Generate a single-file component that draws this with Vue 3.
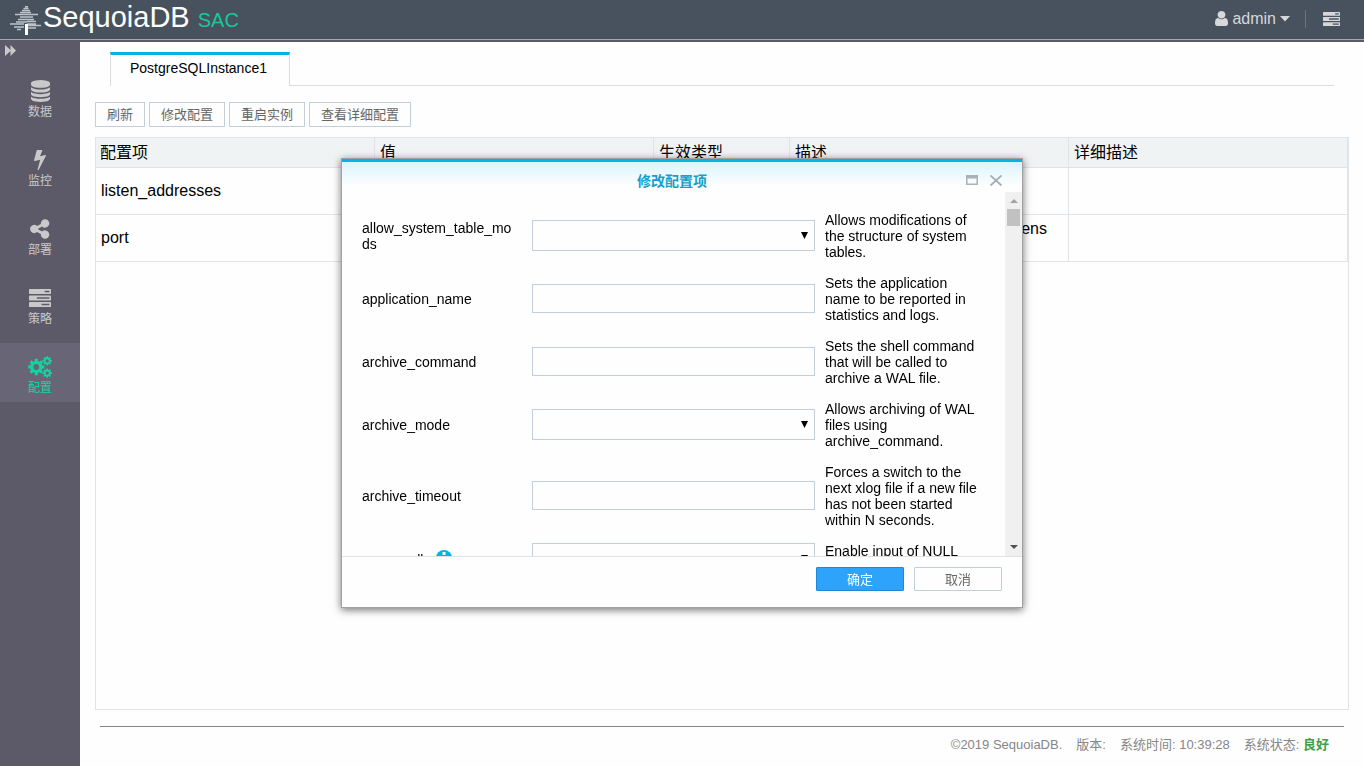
<script setup>
import { ref } from 'vue'

const gear = (cx, cy, outer, inner, hole, teeth) => {
  const step = (Math.PI * 2) / teeth
  const pts = []
  for (let i = 0; i < teeth; i++) {
    const a = i * step
    for (const [r, o] of [[inner, -0.3], [outer, -0.24], [outer, 0.24], [inner, 0.3]]) {
      pts.push(`${(cx + r * Math.cos(a + o * step)).toFixed(2)} ${(cy + r * Math.sin(a + o * step)).toFixed(2)}`)
    }
  }
  return `M${pts.join('L')}ZM${cx - hole} ${cy}a${hole} ${hole} 0 1 0 ${hole * 2} 0a${hole} ${hole} 0 1 0 ${-hole * 2} 0Z`
}

const bars = 'M1024 1408h640v-128h-640v128zM640 896h1024v-128h-1024v128zM1280 384h384v-128h-384v128zM1792 1216v256q0 26-19 45t-45 19h-1664q-26 0-45-19t-19-45v-256q0-26 19-45t45-19h1664q26 0 45 19t19 45zM1792 704v256q0 26-19 45t-45 19h-1664q-26 0-45-19t-19-45v-256q0-26 19-45t45-19h1664q26 0 45 19t19 45zM1792 192v256q0 26-19 45t-45 19h-1664q-26 0-45-19t-19-45v-256q0-26 19-45t45-19h1664q26 0 45 19t19 45z'

const nav = [
  { text: '数据', w: 19, h: 22, box: '0 0 1536 1792', d: 'M768 768q237 0 443-43t325-127v170q0 69-103 128t-280 93.5-385 34.5-385-34.5-280-93.5-103-128v-170q119 84 325 127t443 43zM768 1536q237 0 443-43t325-127v170q0 69-103 128t-280 93.5-385 34.5-385-34.5-280-93.5-103-128v-170q119 84 325 127t443 43zM768 1152q237 0 443-43t325-127v170q0 69-103 128t-280 93.5-385 34.5-385-34.5-280-93.5-103-128v-170q119 84 325 127t443 43zM768 0q208 0 385 34.5t280 93.5 103 128v128q0 69-103 128t-280 93.5-385 34.5-385-34.5-280-93.5-103-128v-128q0-69 103-128t280-93.5 385-34.5z' },
  { text: '监控', w: 12, h: 20, box: '0 0 896 1664', d: 'M885 438q18 20 7 44l-540 1157q-13 25-42 25-4 0-14-2-17-5-25.5-19t-4.5-30l197-808-406 101q-4 1-12 1-18 0-31-11-18-15-13-39l201-825q4-16 18-26t32-10h328q19 0 32 12.5t13 29.5q0 8-5 18l-171 463 396-98q8-2 12-2 19 0 34 15z' },
  { text: '部署', w: 20, h: 20, box: '0 0 20 20', d: 'M0 10a4.2 4.2 0 0 1 7-3.1l3.9-1.95a4.2 4.2 0 1 1 1.25 2.5l-3.9 1.95v1.2l3.9 1.95a4.2 4.2 0 1 1-1.25 2.5l-3.9-1.95A4.2 4.2 0 0 1 0 10z' },
  { text: '策略', w: 22, h: 18, box: '0 128 1792 1408', d: bars },
  { text: '配置', w: 24, h: 22, box: '0 0 24 22', d: gear(8.3, 11, 8.3, 6.2, 2.9, 8) + gear(19.2, 4.9, 4.8, 3.6, 1.6, 8) + gear(19.2, 17.1, 4.8, 3.6, 1.6, 8), active: true }
]

const actions = ['刷新', '修改配置', '重启实例', '查看详细配置']
const columns = ['配置项', '值', '生效类型', '描述', '详细描述']
const rows = [
  ['listen_addresses', '', '', '', ''],
  ['port', '', '', 'Sets the TCP port the server listens on.', '']
]

const fields = ref([
  { name: 'allow_system_table_mods', type: 'select', value: '', desc: 'Allows modifications of the structure of system tables.' },
  { name: 'application_name', type: 'text', value: '', desc: 'Sets the application name to be reported in statistics and logs.' },
  { name: 'archive_command', type: 'text', value: '', desc: 'Sets the shell command that will be called to archive a WAL file.' },
  { name: 'archive_mode', type: 'select', value: '', desc: 'Allows archiving of WAL files using archive_command.' },
  { name: 'archive_timeout', type: 'text', value: '', desc: 'Forces a switch to the next xlog file if a new file has not been started within N seconds.' },
  { name: 'array_nulls', type: 'select', value: '', info: true, desc: 'Enable input of NULL elements in arrays.' }
])
</script>

<template>
  <div class="page">
    <header class="top">
      <div class="brand">
        <svg class="tree" width="32" height="29" viewBox="0 0 32 29">
          <g stroke="#bcc3c8" stroke-width="1.400" fill="none">
            <path d="M15 .7h3M13.500 2.500h5M12 4.500h8M10 6.500h11M5 8.500h23M10 11h13M8 13.500h16M6 16h11M17 15.500h9M0 18h14M17 18h9M15 19.500h16M4 21h10M18 22h8M7 23.500h4" />
          </g>
          <path d="M15 18h3v11h-3z" fill="#fff" />
        </svg>
        <span class="name">SequoiaDB</span>
        <span class="sac">SAC</span>
      </div>
      <div class="tools">
        <button class="user" type="button">
          <svg width="13" height="15" viewBox="0 128 1280 1536" preserveAspectRatio="none"><path fill="currentColor" d="M1280 1399q0 109-62.500 187t-150.500 78h-854q-88 0-150.500-78t-62.500-187q0-85 8.500-160.500t31.500-152 58.500-131 94-89 134.500-34.500q131 128 313 128t313-128q76 0 134.500 34.500t94 89 58.500 131 31.500 152 8.500 160.500zM1024 512q0 159-112.500 271.500t-271.500 112.500-271.500-112.500-112.500-271.500 112.500-271.500 271.500-112.500 271.500 112.500 112.500 271.500z" /></svg>
          <span>admin</span>
          <svg width="10" height="6" viewBox="0 0 10 6"><path fill="currentColor" d="M0 0h10L5 5.500z" /></svg>
        </button>
        <button class="tasks" type="button" aria-label="任务">
          <svg width="17" height="14" viewBox="0 128 1792 1408" preserveAspectRatio="none"><path fill="currentColor" :d="bars" /></svg>
        </button>
      </div>
    </header>

    <div class="shell">
      <nav class="side">
        <button class="expand" type="button" aria-label="展开">
          <svg width="11" height="11" viewBox="0 0 11 11"><path fill="currentColor" d="M0 0l5.500 5V0L11 5.500 5.500 11V6L0 11z" /></svg>
        </button>
        <a v-for="n in nav" :key="n.text" href="#" :class="['item', { active: n.active }]">
          <span class="icon"><svg :width="n.w" :height="n.h" :viewBox="n.box" preserveAspectRatio="none"><path fill="currentColor" fill-rule="evenodd" :d="n.d" /></svg></span>
          <span>{{ n.text }}</span>
        </a>
      </nav>

      <main class="main">
        <div class="tabs">
          <a class="tab" href="#">PostgreSQLInstance1</a>
        </div>
        <div class="actions">
          <button v-for="a in actions" :key="a" class="btn" type="button">{{ a }}</button>
        </div>
        <div class="grid">
          <table>
            <colgroup><col><col><col class="narrow"><col><col></colgroup>
            <thead>
              <tr><th v-for="c in columns" :key="c">{{ c }}</th></tr>
            </thead>
            <tbody>
              <tr v-for="r in rows" :key="r[0]"><td v-for="(c, i) in r" :key="i">{{ c }}</td></tr>
            </tbody>
          </table>
        </div>
        <footer class="foot">
          <span>©2019 SequoiaDB.</span>
          <span>版本:</span>
          <span>系统时间: 10:39:28</span>
          <span>系统状态: <b>良好</b></span>
        </footer>
      </main>
    </div>

    <div class="overlay">
      <section class="modal" role="dialog" aria-labelledby="modal-title">
        <div class="modal-head">
          <h2 id="modal-title">修改配置项</h2>
          <div class="modal-tools">
            <button type="button" aria-label="最大化">
              <svg width="12" height="10" viewBox="0 0 12 10"><path fill="#a9b2b9" fill-rule="evenodd" d="M0 0h12v10H0zM1.500 3.500v5h9v-5z" /></svg>
            </button>
            <button type="button" aria-label="关闭">
              <svg width="12" height="11" viewBox="0 0 12 11"><path stroke="#a3acb3" stroke-width="1.800" d="M.5.5l11 10M11.500.5l-11 10" /></svg>
            </button>
          </div>
        </div>
        <div class="modal-body">
          <form class="form">
            <div v-for="f in fields" :key="f.name" class="field">
              <label :for="f.name">{{ f.name }}<svg v-if="f.info" class="info" width="16" height="16" viewBox="0 0 16 16"><circle cx="8" cy="8" r="8" fill="#00b4e5" /><path fill="#fff" d="M6.500 2h3v3h-3zM5.500 6.500h4V11h1.200v2H5.500v-2h1V8.500h-1z" /></svg></label>
              <div v-if="f.type === 'select'" class="pick">
                <select :id="f.name" v-model="f.value"><option value=""></option></select>
                <svg width="7" height="7" viewBox="0 0 7 7"><path d="M0 0h7L3.500 7z" /></svg>
              </div>
              <input v-else :id="f.name" v-model="f.value" type="text">
              <p>{{ f.desc }}</p>
            </div>
          </form>
          <div class="scroll" aria-hidden="true">
            <svg width="8" height="4" viewBox="0 0 8 4"><path fill="#a3a3a3" d="M4 0l4 4H0z" /></svg>
            <i></i>
            <svg width="8" height="4" viewBox="0 0 8 4"><path fill="#505050" d="M0 0h8L4 4z" /></svg>
          </div>
        </div>
        <div class="modal-foot">
          <button class="ok" type="button">确定</button>
          <button class="cancel" type="button">取消</button>
        </div>
      </section>
    </div>
  </div>
</template>

<style>
body {
  margin: 0;
}
</style>

<style scoped>
* {
  box-sizing: border-box;
}
.page {
  min-height: 100vh;
  display: flex;
  flex-direction: column;
  background: #fefefe;
  color: #000;
  font: 16px/18px "Liberation Sans", "Noto Sans CJK SC", sans-serif;
}
button, input, select {
  font-family: inherit;
}
a {
  text-decoration: none;
}
svg {
  display: block;
  flex: none;
}
.top {
  height: 42px;
  padding: 0 24px 5px 10px;
  display: flex;
  align-items: center;
  justify-content: space-between;
  background: linear-gradient(#47525e 39px, #a6a5ae 39px, #a6a5ae 40px, #5c5a69 40px);
}
.brand {
  display: flex;
  align-items: baseline;
  padding-bottom: 4px;
  color: #fff;
}
.tree {
  align-self: flex-end;
  margin-right: 1px;
}
.name {
  font-size: 29px;
  line-height: 36px;
}
.sac {
  margin-left: 8px;
  font-size: 20px;
  color: #19c89a;
}
.tools {
  display: flex;
  align-items: center;
}
.tools button {
  padding: 0;
  border: 0;
  background: none;
  color: #d6d8da;
}
.user {
  display: flex;
  align-items: center;
  gap: 4px;
  font-size: 16px;
  line-height: 18px;
}
.tools .tasks {
  height: 18px;
  margin-left: 15px;
  padding-left: 17px;
  border-left: 1px solid #6c747d;
}
.shell {
  flex: 1;
  display: flex;
}
.side {
  flex: none;
  width: 80px;
  background: #5c5a69;
  display: flex;
  flex-direction: column;
  gap: 10px;
}
.expand {
  height: 15px;
  padding: 3px 5px;
  border: 0;
  background: none;
  color: #c9c9c9;
}
.item {
  height: 59px;
  padding-top: 13px;
  display: flex;
  flex-direction: column;
  align-items: center;
  color: #c9c9c9;
  font-size: 12px;
  line-height: 20px;
}
.icon {
  height: 22px;
  display: flex;
  align-items: center;
}
.active {
  background: #676576;
  color: #13d49f;
}
.main {
  flex: 1;
  min-width: 0;
  display: flex;
  flex-direction: column;
  padding: 10px 15px 0;
}
.tabs {
  margin: 0 15px;
  height: 34px;
  display: flex;
  border-bottom: 1px solid #dadcde;
}
.tab {
  height: 34px;
  padding: 4px 22px 4px 19px;
  border: 1px solid #dadcde;
  border-top: 3px solid #00b4e5;
  border-bottom: 0;
  background: #fefefe;
  color: #000;
  font-size: 14px;
}
.actions {
  display: flex;
  gap: 4px;
  margin: 16px 0 10px;
}
.btn {
  height: 25px;
  padding: 0 11px;
  border: 1px solid #c3cedb;
  background: #fefefe;
  color: #666;
  font-size: 13px;
  line-height: 18px;
}
.grid {
  flex: 1;
  border: 1px solid #e1e4e6;
}
table {
  width: 100%;
  table-layout: fixed;
  border-collapse: separate;
  border-spacing: 0;
}
.narrow {
  width: 136px;
}
th, td {
  border-right: 1px solid #e1e4e6;
  border-bottom: 1px solid #e1e4e6;
  text-align: left;
  font-weight: 400;
}
th {
  height: 30px;
  padding: 0 5px 0 4px;
  background: #eff3f4;
}
th + th {
  padding-left: 5px;
}
td {
  height: 47px;
  padding: 5px;
}
.foot {
  margin: 16px 5px 0;
  padding: 9px 15px 12px 0;
  border-top: 1px solid #868686;
  display: flex;
  justify-content: flex-end;
  gap: 14px;
  color: #868686;
  font-size: 13px;
}
.foot b {
  color: #3ea04b;
}
.overlay {
  position: fixed;
  inset: 0;
  display: grid;
  place-items: center;
}
.modal {
  width: 50%;
  border: 1px solid #a0a0a0;
  background: #fefefe;
  box-shadow: 0 2px 8px rgba(0, 0, 0, .55);
}
.modal-head {
  height: 33px;
  border-top: 3px solid #00b4e5;
  background: linear-gradient(#daf5fd, #fefefe 24px);
  display: grid;
  grid-template-columns: 1fr auto 1fr;
  align-items: center;
  padding: 6px 20px 0 0;
}
h2 {
  grid-column: 2;
  margin: 0;
  padding-top: 1px;
  color: #159fc9;
  font-size: 14px;
  line-height: 18px;
}
.modal-tools {
  display: flex;
  align-items: center;
  justify-content: flex-end;
  gap: 12px;
}
.modal-tools button {
  padding: 0;
  border: 0;
  background: none;
}
.modal-body {
  height: 364px;
  overflow: hidden;
  display: flex;
}
.form {
  flex: 1;
  padding: 20px 20px 0;
  display: flex;
  flex-direction: column;
  gap: 15px;
  font-size: 14px;
  line-height: 16px;
}
.field {
  display: grid;
  grid-template-columns: 160px 1fr 160px;
  gap: 10px;
  align-items: center;
}
label {
  padding-right: 5px;
  overflow-wrap: anywhere;
}
.info {
  display: inline-block;
  margin-left: 6px;
  vertical-align: -1px;
}
.field p {
  margin: 0;
}
.field input, .field select {
  display: block;
  width: 100%;
  height: 29px;
  margin: 0 0 1px;
  padding: 0 8px;
  border: 1px solid #c3cedb;
  border-radius: 0;
  background: #fefefe;
  font-size: 14px;
}
.field select {
  height: 31px;
  appearance: none;
}
.pick {
  position: relative;
}
.pick svg {
  position: absolute;
  right: 7px;
  top: 12px;
  pointer-events: none;
}
.scroll {
  flex: none;
  width: 17px;
  padding: 7px 0;
  background: #f0f0f0;
  display: flex;
  flex-direction: column;
  align-items: center;
}
.scroll i {
  width: 13px;
  height: 17px;
  margin: 6px 0 auto;
  background: #c1c1c1;
}
.modal-foot {
  height: 51px;
  padding: 10px 20px;
  border-top: 1px solid #e1e1e1;
  display: flex;
  align-items: flex-start;
  justify-content: flex-end;
  gap: 10px;
}
.modal-foot button {
  width: 88px;
  height: 24px;
  padding: 2px 0 0;
  border-radius: 1px;
  font-size: 13px;
  line-height: 18px;
}
.ok {
  border: 1px solid #1f87d6;
  background: #2ea3fb;
  color: #fff;
}
.modal-foot .cancel {
  border: 1px solid #c3cedb;
  background: #fefefe;
  color: #666;
}
</style>
